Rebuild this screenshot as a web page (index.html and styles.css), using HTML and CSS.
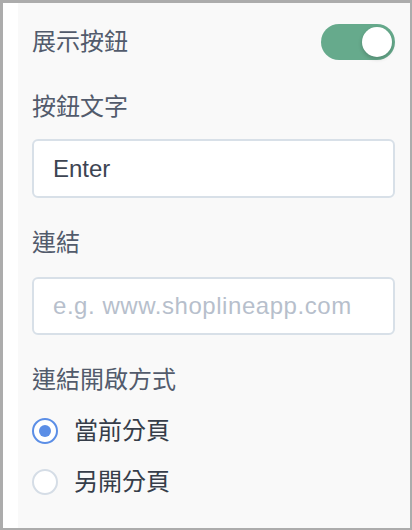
FILE: index.html
```html
<!DOCTYPE html>
<html lang="zh-Hant">
<head>
<meta charset="utf-8">
<link rel="stylesheet" href="styles.css">
</head>
<body>
<div class="frame">
  <div class="panel">
    <div class="row-toggle">
      <span class="label">展示按鈕</span>
      <span class="toggle"><span class="knob"></span></span>
    </div>
    <div class="label label-btntext">按鈕文字</div>
    <div class="input input-first">Enter</div>
    <div class="label label-link">連結</div>
    <div class="input input-second placeholder">e.g. www.shoplineapp.com</div>
    <div class="label label-open">連結開啟方式</div>
    <div class="radios">
      <div class="radio-row"><span class="radio checked"></span><span class="radio-text">當前分頁</span></div>
      <div class="radio-row"><span class="radio"></span><span class="radio-text">另開分頁</span></div>
    </div>
  </div>
</div>
</body>
</html>
```
FILE: styles.css
```css
html, body {
  margin: 0;
  padding: 0;
}
body {
  font-family: "Liberation Sans", "Noto Sans CJK TC", sans-serif;
  font-size: 24px;
}
.frame {
  width: 412px;
  height: 530px;
  box-sizing: border-box;
  border: 3px solid #acacac;
  border-right-width: 2px;
  border-bottom-width: 2px;
  background: #ffffff;
  padding-left: 15px;
  display: flex;
}
.panel {
  flex: 1;
  background: #f9f9f9;
  padding: 21px 15px 0 14px;
  display: flex;
  flex-direction: column;
}
.row-toggle {
  display: flex;
  justify-content: space-between;
  align-items: center;
  height: 36px;
}
.label {
  color: #525b6c;
  line-height: 34px;
  height: 34px;
}
.toggle {
  width: 74px;
  height: 36px;
  border-radius: 18px;
  background: #66aa8c;
  display: flex;
  align-items: center;
  justify-content: flex-end;
  padding-right: 3px;
  box-sizing: border-box;
}
.knob {
  width: 30px;
  height: 30px;
  border-radius: 50%;
  background: #ffffff;
  box-shadow: 0 2px 4px rgba(0, 0, 0, 0.2);
}
.label-btntext { margin-top: 30px; }
.label-link { margin-top: 28px; }
.label-open { margin-top: 28px; }
.input {
  height: 59px;
  box-sizing: border-box;
  border: 2px solid #d8e0e8;
  border-radius: 6px;
  background: #ffffff;
  padding-left: 19px;
  display: flex;
  align-items: center;
  color: #3d4452;
}
.input-first { margin-top: 15px; }
.input-second { margin-top: 17px; height: 58px; }
.placeholder {
  color: #b7bfcc;
  letter-spacing: 0.55px;
}
.radios {
  margin-top: 17px;
  display: flex;
  flex-direction: column;
  gap: 17px;
}
.radio-row {
  display: flex;
  align-items: center;
  height: 34px;
  gap: 16px;
}
.radio {
  width: 26px;
  height: 26px;
  box-sizing: border-box;
  border-radius: 50%;
  border: 2px solid #d5dde6;
  background: #ffffff;
  display: flex;
  align-items: center;
  justify-content: center;
}
.radio.checked {
  border: 2.5px solid #5b8ee6;
}
.radio.checked::after {
  content: "";
  width: 12px;
  height: 12px;
  border-radius: 50%;
  background: #5b8ee6;
}
.radio-text {
  color: #363d49;
  line-height: 34px;
}
```
